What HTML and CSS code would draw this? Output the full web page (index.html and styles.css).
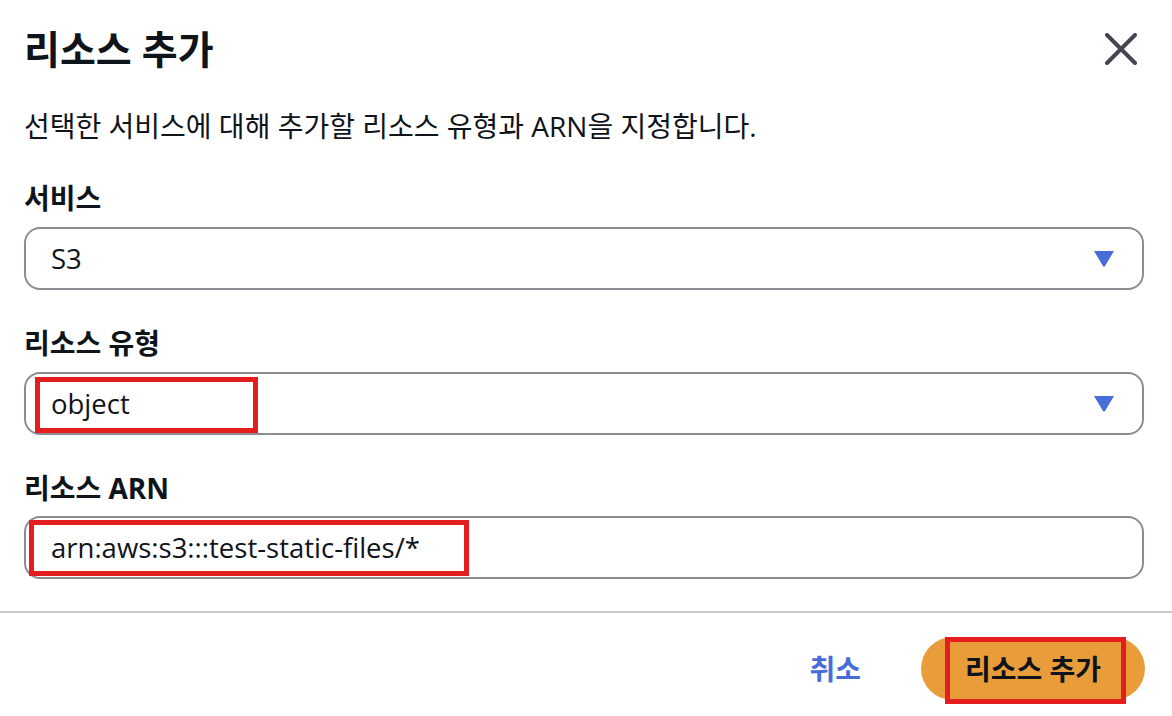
FILE: index.html
```html
<!DOCTYPE html>
<html lang="ko">
<head>
<meta charset="utf-8">
<title>리소스 추가</title>
<link rel="stylesheet" href="styles.css">
</head>
<body>
<div class="modal">
  <div class="header">
    <h1 class="title">리소스 추가</h1>
    <button class="close" aria-label="닫기">
      <svg width="32" height="32" viewBox="0 0 32 32"><path d="M2 2 L30 30 M30 2 L2 30" stroke="#424650" stroke-width="4" stroke-linecap="round" fill="none"/></svg>
    </button>
  </div>
  <div class="body">
    <p class="desc">선택한 서비스에 대해 추가할 리소스 유형과 ARN을 지정합니다.</p>
    <div class="field">
      <div class="label">서비스</div>
      <div class="select">
        <span class="value">S3</span>
        <svg class="caret" width="20" height="16" viewBox="0 0 20 16"><path d="M0 0 H20 L11 15 Q10 16.5 9 15 Z" fill="#476ddb"/></svg>
      </div>
    </div>
    <div class="field">
      <div class="label">리소스 유형</div>
      <div class="select">
        <span class="value">object</span>
        <svg class="caret" width="20" height="16" viewBox="0 0 20 16"><path d="M0 0 H20 L11 15 Q10 16.5 9 15 Z" fill="#476ddb"/></svg>
        <span class="mark mark-object"></span>
      </div>
    </div>
    <div class="field">
      <div class="label">리소스 ARN</div>
      <div class="select input">
        <span class="value">arn:aws:s3:::test-static-files/*</span>
        <span class="mark mark-arn"></span>
      </div>
    </div>
  </div>
  <div class="footer">
    <button class="cancel">취소</button>
    <button class="primary">리소스 추가<span class="mark mark-btn"></span></button>
  </div>
</div>
</body>
</html>
```

FILE: styles.css
```css
* { box-sizing: border-box; }
html, body { margin: 0; padding: 0; background: #ffffff; }
body {
  font-family: "Open Sans", "Noto Sans CJK KR", sans-serif;
  color: #0f141a;
  width: 1172px;
  height: 716px;
  overflow: hidden;
}
.modal { width: 1172px; }
.header {
  display: flex;
  align-items: center;
  justify-content: space-between;
  padding: 27px 35px 0 24px;
}
.title {
  margin: 0;
  font-size: 39px;
  line-height: 44px;
  font-weight: 700;
}
.close {
  border: 0;
  background: none;
  padding: 0;
  width: 32px;
  height: 32px;
  display: flex;
}
.body { padding: 0 28px 32px 24px; }
.desc {
  margin: 37px 0 0;
  font-size: 28px;
  line-height: 36px;
  color: #0f141a;
}
.field { display: flex; flex-direction: column; }
.field:first-of-type .label { margin-top: 36px; }
.label {
  margin-top: 35px;
  font-size: 28px;
  line-height: 36px;
  font-weight: 700;
}
.select {
  position: relative;
  margin-top: 11px;
  height: 63px;
  border: 2px solid #8c8c94;
  border-radius: 16px;
  display: flex;
  align-items: center;
  justify-content: space-between;
  padding: 0 28px 0 25px;
}
.input { margin-top: 10px; }
.value {
  font-size: 27.5px;
  line-height: 36px;
  color: #0f141a;
}
.caret { display: block; margin-top: 1px; }
.footer {
  border-top: 2px solid #c6c6cd;
  display: flex;
  justify-content: flex-end;
  align-items: center;
  padding: 24px 27px 0 24px;
}
.cancel {
  border: 0;
  background: none;
  font-family: inherit;
  font-size: 28px;
  font-weight: 700;
  color: #476ddb;
  padding: 0;
  margin-right: 60px;
  line-height: 36px;
}
.primary {
  position: relative;
  border: 0;
  font-family: inherit;
  font-size: 28px;
  font-weight: 700;
  color: #0f141a;
  background: #e89d3a;
  height: 63px;
  border-radius: 32px;
  padding: 0 44px;
  line-height: 36px;
}
.mark {
  position: absolute;
  border: 5px solid #e41e1e;
  pointer-events: none;
}
.mark-object { left: 9px; top: 3px; width: 223px; height: 56px; }
.mark-arn { left: 3px; top: 2px; width: 440px; height: 56px; }
.mark-btn { left: 24px; top: 0; width: 181px; height: 67px; }
```
